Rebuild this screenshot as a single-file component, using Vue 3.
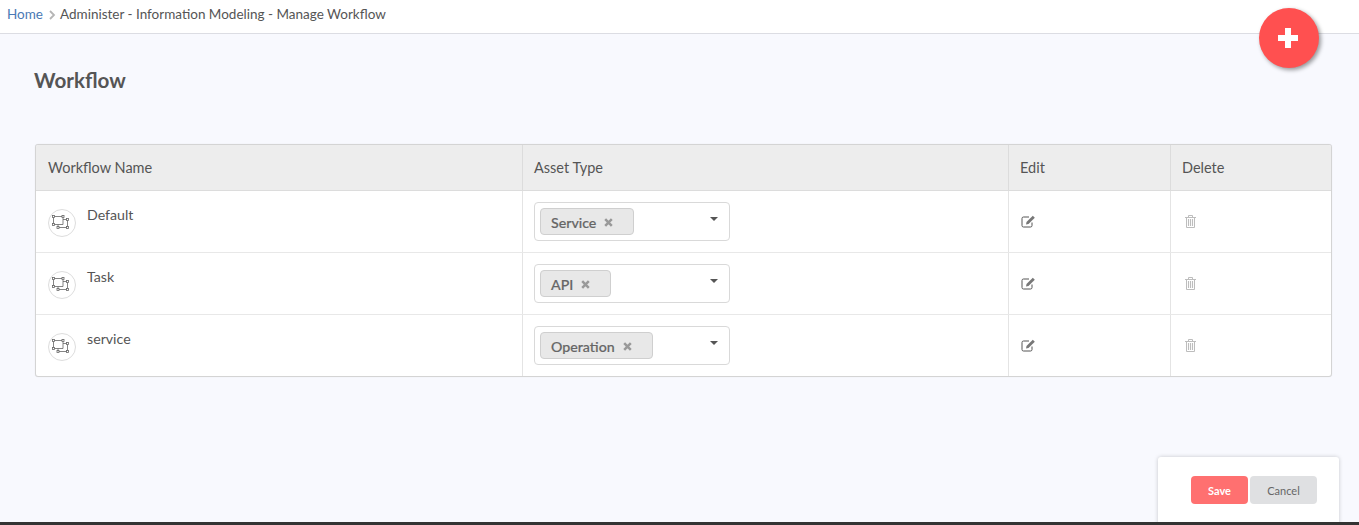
<script setup>
const rows = [
  { name: 'Default', asset: 'Service' },
  { name: 'Task', asset: 'API' },
  { name: 'service', asset: 'Operation' },
]
</script>

<template>
  <div class="page">
    <header class="crumbs">
      <a class="home">Home</a>
      <svg class="chev" width="8" height="10" viewBox="0 0 8 10"><path d="M2 1l4 4-4 4" fill="none" stroke="#b5b5b5" stroke-width="1.8" /></svg>
      <span>Administer - Information Modeling - Manage Workflow</span>
    </header>

    <main class="content">
      <h1>Workflow</h1>
      <div class="table">
        <div class="row head">
          <div class="cell c1">Workflow Name</div>
          <div class="cell c2">Asset Type</div>
          <div class="cell c3">Edit</div>
          <div class="cell c4">Delete</div>
        </div>
        <div v-for="r in rows" :key="r.name" class="row body">
          <div class="cell c1 namecell">
            <span class="wficon">
              <svg width="20" height="16" viewBox="0 0 20 16" fill="none" stroke="#666" stroke-width="0.800">
                <path d="M1.500 2.500H11V10.500H1.500Z" />
                <path d="M11 5.500H15.500V13.500H6V10.500" />
                <rect x="0.500" y="1.500" width="2" height="2" fill="#fff" />
                <rect x="10" y="1.500" width="2" height="2" fill="#fff" />
                <rect x="0.500" y="9.500" width="2" height="2" fill="#fff" />
                <rect x="14.500" y="4.500" width="2" height="2" fill="#fff" />
                <rect x="14.500" y="12.500" width="2" height="2" fill="#fff" />
                <rect x="5" y="12.500" width="2" height="2" fill="#fff" />
              </svg>
            </span>
            <span class="name">{{ r.name }}</span>
          </div>
          <div class="cell c2">
            <div class="select">
              <span class="tag">{{ r.asset }}<svg class="x" width="9" height="9" viewBox="0 0 9 9"><path d="M1.200 1.200l6.600 6.600M7.800 1.200l-6.600 6.600" stroke="#999" stroke-width="2.500" /></svg></span>
              <span class="caret"></span>
            </div>
          </div>
          <div class="cell c3">
            <svg class="act edit" width="15" height="13" viewBox="0 0 15 13" fill="none">
              <path d="M11 7.500V10.500a1.500 1.500 0 0 1-1.500 1.500H2.500A1.500 1.500 0 0 1 1 10.500V3.500A1.500 1.500 0 0 1 2.500 2H8" stroke="#555" stroke-width="1" />
              <path d="M5.500 7l6.300-6.300 2 2L7.500 9l-2.500.5z" fill="#777" />
            </svg>
          </div>
          <div class="cell c4">
            <svg class="act trash" width="11" height="13" viewBox="0 0 11 13" fill="none" stroke="#bdbdbd">
              <path d="M0 2.500h11" />
              <path d="M3.500 2.500V0.500h4v2" />
              <path d="M1.500 2.500v10h8v-10" />
              <path d="M3.500 4v7M5.500 4v7M7.500 4v7" stroke-width="1.100" />
            </svg>
          </div>
        </div>
      </div>
    </main>

    <div class="fab">
      <svg width="20" height="20" viewBox="0 0 20 20"><path d="M7 0h6v7h7v6h-7v7H7v-7H0V7h7z" fill="#fff" /></svg>
    </div>

    <div class="savebar">
      <button class="btn save">Save</button>
      <button class="btn cancel">Cancel</button>
    </div>
  </div>
</template>

<style scoped>
.page {
  position: relative;
  width: 1359px;
  height: 525px;
  overflow: hidden;
  background: #f8f9fe;
  font-family: Lato, "Open Sans", sans-serif;
  color: #555;
  font-size: 14px;
  display: flex;
  flex-direction: column;
  box-sizing: border-box;
  border-bottom: 3px solid #333;
}
.crumbs {
  flex: none;
  background: #fff;
  border-bottom: 1px solid #dcdde3;
  display: flex;
  align-items: center;
  padding: 0 0 5px 7px;
  height: 28px;
  font-size: 13.500px;
  color: #555;
}
.home { color: #4a7ab5; }
.chev { margin: 1px 4px 0 5px; }
.content {
  flex: 1;
  padding: 0 27px 0 35px;
}
h1 {
  margin: 34px 0 0 -1px;
  height: 24px;
  line-height: 24px;
  font-size: 20.600px;
  font-weight: 700;
  color: #555;
}
.table {
  margin-top: 52px;
  border: 1px solid #d4d4d4;
  border-radius: 3px;
  background: #fff;
  overflow: hidden;
  box-shadow: 0 0 1px rgba(0, 0, 0, 0.12);
}
.row { display: flex; }
.head {
  height: 45px;
  background: #ededed;
  border-bottom: 1px solid #dcdcdc;
  font-size: 14.500px;
}
.body {
  height: 61px;
  border-bottom: 1px solid #e8e8e8;
}
.body:last-child { border-bottom: 0; }
.cell {
  box-sizing: border-box;
  padding: 0 11px;
  display: flex;
  align-items: center;
  border-right: 1px solid #e4e4e4;
}
.c1 { width: 487px; padding-left: 12px; }
.c2 { width: 486px; }
.c3 { width: 162px; }
.c4 { flex: 1; border-right: 0; }
.head .cell { border-right-color: #dcdcdc; }
.namecell {
  align-items: flex-start;
}
.wficon {
  width: 26px;
  height: 26px;
  margin-top: 18px;
  border: 1px solid #ddd;
  border-radius: 50%;
  background: #fff;
  display: flex;
  align-items: center;
  justify-content: center;
  flex: none;
}
.wficon svg { margin-top: -2px; }
.name {
  margin: 15px 0 0 11px;
  line-height: 18px;
  font-size: 14.200px;
}
.select {
  width: 196px;
  height: 39px;
  margin-bottom: 1px;
  box-sizing: border-box;
  border: 1px solid #d9d9d9;
  border-radius: 4px;
  background: #fff;
  padding: 5px;
  display: flex;
  align-items: flex-start;
  position: relative;
}
.tag {
  height: 27px;
  box-sizing: border-box;
  background: #e8e8e8;
  border: 1px solid #cfcfcf;
  border-radius: 4px;
  padding: 2px 20px 0 10px;
  display: inline-flex;
  align-items: center;
  color: #666;
  font-size: 14.200px;
  font-weight: 500;
  -webkit-text-stroke: 0.2px #666;
}
.x { margin-left: 8px; margin-top: 1px; }
.caret {
  position: absolute;
  right: 11px;
  top: 14px;
  width: 0;
  height: 0;
  border-left: 4px solid transparent;
  border-right: 4px solid transparent;
  border-top: 4px solid #555;
}
.edit { margin-left: 1px; }
.trash { margin-left: 3px; }
.fab {
  position: absolute;
  left: 1259px;
  top: 8px;
  width: 60px;
  height: 60px;
  box-sizing: border-box;
  padding: 0 2px 1px 0;
  border-radius: 50%;
  background: #ff5050;
  box-shadow: 2px 2px 4px rgba(0, 0, 0, 0.4);
  display: flex;
  align-items: center;
  justify-content: center;
}
.savebar {
  position: absolute;
  left: 1158px;
  top: 457px;
  width: 181px;
  height: 72px;
  box-sizing: border-box;
  background: #fff;
  border-radius: 3px;
  box-shadow: 0 0 4px rgba(0, 0, 0, 0.2);
  padding: 19px 0 0 33px;
  display: flex;
  align-items: flex-start;
  gap: 2px;
}
.btn {
  height: 28px;
  border: 0;
  border-radius: 4px;
  font-family: Lato, sans-serif;
  font-size: 11px;
  padding: 0;
}
.save {
  width: 57px;
  background: #ff7070;
  color: #fff;
  font-weight: 700;
}
.cancel {
  width: 67px;
  background: #dfe0e2;
  color: #666;
}
</style>
